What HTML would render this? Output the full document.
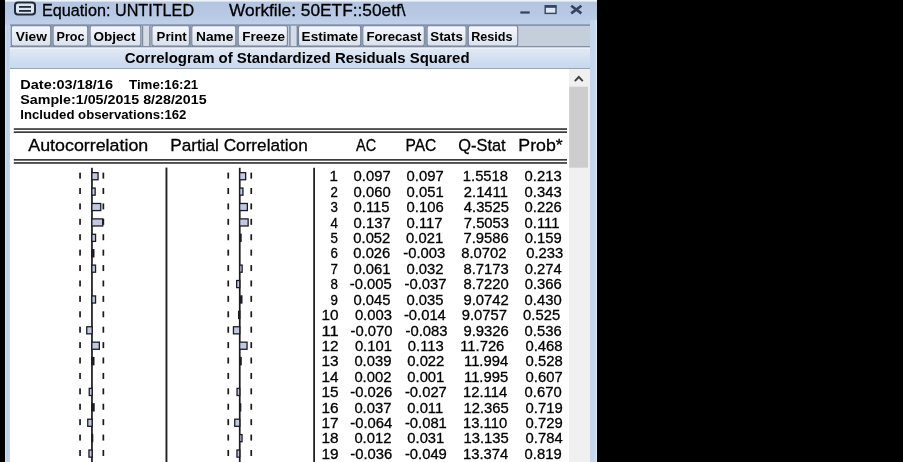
<!DOCTYPE html>
<html><head><meta charset="utf-8"><style>
html,body{margin:0;padding:0;background:#000;width:903px;height:462px;overflow:hidden}
svg{display:block;will-change:transform}
text{font-family:"Liberation Sans",sans-serif}
</style></head><body>
<svg width="903" height="462" viewBox="0 0 903 462">
<defs>
<linearGradient id="gTitle" x1="0" y1="0" x2="0" y2="1"><stop offset="0" stop-color="#b2c4e1"/><stop offset="0.6" stop-color="#b7c9e4"/><stop offset="1" stop-color="#bfd0ea"/></linearGradient>
<linearGradient id="gBtn" x1="0" y1="0" x2="0" y2="1"><stop offset="0" stop-color="#f5f7fb"/><stop offset="0.5" stop-color="#e9eef5"/><stop offset="1" stop-color="#d9e1ec"/></linearGradient>
<linearGradient id="gHdr" x1="0" y1="0" x2="0" y2="1"><stop offset="0" stop-color="#e2eaf6"/><stop offset="1" stop-color="#c7d7ed"/></linearGradient>
<linearGradient id="gLeft" x1="0" y1="0" x2="1" y2="0"><stop offset="0" stop-color="#d2dff2"/><stop offset="0.5" stop-color="#bdd0ea"/><stop offset="1" stop-color="#c8d8ee"/></linearGradient>
</defs>
<!-- window frame -->
<rect x="5" y="0" width="592" height="462" fill="#c2d3eb"/>
<rect x="5" y="0" width="592" height="25" fill="url(#gTitle)"/>
<rect x="5" y="0" width="592" height="1.6" fill="#eef2f9"/>
<rect x="5" y="25" width="5" height="437" fill="url(#gLeft)"/>
<rect x="590" y="20" width="7" height="442" fill="#c5d6ee"/>
<rect x="595.6" y="20" width="1.4" height="442" fill="#d9e7f8"/>
<!-- title icon -->
<rect x="15" y="2.6" width="20" height="12" rx="3" ry="3" fill="#dbe6f5" stroke="#222a38" stroke-width="2"/>
<rect x="19" y="6" width="12" height="1.8" fill="#222a38"/>
<rect x="19" y="10" width="12" height="1.8" fill="#222a38"/>
<!-- window controls -->
<rect x="520.3" y="11.4" width="9.4" height="2.2" fill="#34435e"/>
<rect x="545.2" y="5.8" width="10.8" height="7.6" fill="#dce7f6" stroke="#34435e" stroke-width="1.4"/>
<rect x="545" y="5.4" width="11.3" height="2.4" fill="#34435e"/>
<path d="M571.2 5.8 L581.4 13.4 M581.4 5.8 L571.2 13.4" stroke="#34435e" stroke-width="2.6"/>
<!-- toolbar -->
<rect x="10" y="25" width="580" height="22" fill="#c5cedb"/>
<rect x="10" y="24.4" width="580" height="1.4" fill="#7a889f"/>
<rect x="10" y="46.2" width="580" height="1.4" fill="#72809a"/>
<rect x="11.30" y="25.8" width="39.40" height="20.2" rx="2" ry="2" fill="url(#gBtn)" stroke="#75839a" stroke-width="1.1"/>
<rect x="53.10" y="25.8" width="34.60" height="20.2" rx="2" ry="2" fill="url(#gBtn)" stroke="#75839a" stroke-width="1.1"/>
<rect x="90.10" y="25.8" width="50.70" height="20.2" rx="2" ry="2" fill="url(#gBtn)" stroke="#75839a" stroke-width="1.1"/>
<rect x="151.90" y="25.8" width="37.50" height="20.2" rx="2" ry="2" fill="url(#gBtn)" stroke="#75839a" stroke-width="1.1"/>
<rect x="191.80" y="25.8" width="44.00" height="20.2" rx="2" ry="2" fill="url(#gBtn)" stroke="#75839a" stroke-width="1.1"/>
<rect x="238.20" y="25.8" width="49.20" height="20.2" rx="2" ry="2" fill="url(#gBtn)" stroke="#75839a" stroke-width="1.1"/>
<rect x="298.50" y="25.8" width="62.20" height="20.2" rx="2" ry="2" fill="url(#gBtn)" stroke="#75839a" stroke-width="1.1"/>
<rect x="362.80" y="25.8" width="61.50" height="20.2" rx="2" ry="2" fill="url(#gBtn)" stroke="#75839a" stroke-width="1.1"/>
<rect x="427.10" y="25.8" width="39.00" height="20.2" rx="2" ry="2" fill="url(#gBtn)" stroke="#75839a" stroke-width="1.1"/>
<rect x="468.30" y="25.8" width="49.40" height="20.2" rx="2" ry="2" fill="url(#gBtn)" stroke="#75839a" stroke-width="1.1"/>
<rect x="51.10" y="25.6" width="1.60" height="20.6" fill="#8693a8"/>
<rect x="88.10" y="25.6" width="1.60" height="20.6" fill="#8693a8"/>
<rect x="189.80" y="25.6" width="1.60" height="20.6" fill="#8693a8"/>
<rect x="236.20" y="25.6" width="1.60" height="20.6" fill="#8693a8"/>
<rect x="361.10" y="25.6" width="1.30" height="20.6" fill="#8693a8"/>
<rect x="424.70" y="25.6" width="2.00" height="20.6" fill="#8693a8"/>
<rect x="466.50" y="25.6" width="1.40" height="20.6" fill="#8693a8"/>
<rect x="141.8" y="25.8" width="8.6" height="20.2" fill="#d5dce6"/><rect x="141.8" y="25.8" width="1.4" height="20.2" fill="#7a889c"/><rect x="149.20000000000002" y="25.8" width="1.4" height="20.2" fill="#7a889c"/>
<rect x="289.2" y="25.8" width="8.6" height="20.2" fill="#d5dce6"/><rect x="289.2" y="25.8" width="1.4" height="20.2" fill="#7a889c"/><rect x="296.59999999999997" y="25.8" width="1.4" height="20.2" fill="#7a889c"/>
<!-- header band -->
<rect x="10" y="47.6" width="580" height="20.6" fill="url(#gHdr)"/>
<rect x="10" y="47.6" width="580" height="1" fill="#f2f6fc"/>
<rect x="10" y="68" width="580" height="1.2" fill="#97a5b8"/>
<!-- content -->
<rect x="10" y="69" width="559" height="393" fill="#fff"/>
<!-- scrollbar -->
<rect x="569" y="69" width="21" height="393" fill="#f0f0f0"/>
<rect x="569.2" y="86.7" width="18.8" height="81" fill="#cdcdcd"/>
<path d="M574.8 81.2 L578.8 77 L582.8 81.2" fill="none" stroke="#404040" stroke-width="1.9"/>
<!-- double lines -->
<rect x="13.8" y="128.2" width="553.2" height="1.7" fill="#3a3a3a"/>
<rect x="13.8" y="131.3" width="553.2" height="1.7" fill="#3a3a3a"/>
<rect x="13.8" y="159" width="553.2" height="1.7" fill="#3a3a3a"/>
<rect x="13.8" y="162.1" width="553.2" height="1.7" fill="#3a3a3a"/>
<!-- chart lines -->
<rect x="91.1" y="167.8" width="1.7" height="295" fill="#1a1a1a"/>
<rect x="238.9" y="167.8" width="1.7" height="295" fill="#1a1a1a"/>
<rect x="165.5" y="167.6" width="1.9" height="295" fill="#222"/>
<rect x="313.2" y="167.8" width="1.8" height="295" fill="#222"/>
<rect x="91.20" y="172.00" width="7.50" height="8.4" fill="#1c1c24"/>
<rect x="92.50" y="173.30" width="4.90" height="5.80" fill="#c2c9e2"/>
<rect x="239.00" y="172.00" width="7.30" height="8.4" fill="#1c1c24"/>
<rect x="240.30" y="173.30" width="4.70" height="5.80" fill="#c2c9e2"/>
<rect x="79.2" y="172.60" width="1.7" height="6" fill="#1a1a1a"/>
<rect x="102.5" y="172.60" width="1.7" height="6" fill="#1a1a1a"/>
<rect x="227.4" y="172.60" width="1.7" height="6" fill="#1a1a1a"/>
<rect x="250.4" y="172.60" width="1.7" height="6" fill="#1a1a1a"/>
<rect x="91.20" y="187.41" width="4.60" height="8.4" fill="#1c1c24"/>
<rect x="92.50" y="188.71" width="2.00" height="5.80" fill="#c2c9e2"/>
<rect x="239.00" y="187.41" width="4.60" height="8.4" fill="#1c1c24"/>
<rect x="240.30" y="188.71" width="2.00" height="5.80" fill="#c2c9e2"/>
<rect x="79.2" y="188.01" width="1.7" height="6" fill="#1a1a1a"/>
<rect x="102.5" y="188.01" width="1.7" height="6" fill="#1a1a1a"/>
<rect x="227.4" y="188.01" width="1.7" height="6" fill="#1a1a1a"/>
<rect x="250.4" y="188.01" width="1.7" height="6" fill="#1a1a1a"/>
<rect x="91.20" y="202.82" width="10.20" height="8.4" fill="#1c1c24"/>
<rect x="92.50" y="204.12" width="7.60" height="5.80" fill="#c2c9e2"/>
<rect x="239.00" y="202.82" width="9.00" height="8.4" fill="#1c1c24"/>
<rect x="240.30" y="204.12" width="6.40" height="5.80" fill="#c2c9e2"/>
<rect x="79.2" y="203.42" width="1.7" height="6" fill="#1a1a1a"/>
<rect x="102.5" y="203.42" width="1.7" height="6" fill="#1a1a1a"/>
<rect x="227.4" y="203.42" width="1.7" height="6" fill="#1a1a1a"/>
<rect x="250.4" y="203.42" width="1.7" height="6" fill="#1a1a1a"/>
<rect x="91.20" y="218.23" width="12.20" height="8.4" fill="#1c1c24"/>
<rect x="92.50" y="219.53" width="9.60" height="5.80" fill="#c2c9e2"/>
<rect x="239.00" y="218.23" width="9.80" height="8.4" fill="#1c1c24"/>
<rect x="240.30" y="219.53" width="7.20" height="5.80" fill="#c2c9e2"/>
<rect x="79.2" y="218.83" width="1.7" height="6" fill="#1a1a1a"/>
<rect x="102.5" y="218.83" width="1.7" height="6" fill="#1a1a1a"/>
<rect x="227.4" y="218.83" width="1.7" height="6" fill="#1a1a1a"/>
<rect x="250.4" y="218.83" width="1.7" height="6" fill="#1a1a1a"/>
<rect x="91.20" y="233.64" width="5.00" height="8.4" fill="#1c1c24"/>
<rect x="92.50" y="234.94" width="2.40" height="5.80" fill="#c2c9e2"/>
<rect x="239.00" y="233.64" width="2.70" height="8.4" fill="#1c1c24"/>
<rect x="79.2" y="234.24" width="1.7" height="6" fill="#1a1a1a"/>
<rect x="102.5" y="234.24" width="1.7" height="6" fill="#1a1a1a"/>
<rect x="227.4" y="234.24" width="1.7" height="6" fill="#1a1a1a"/>
<rect x="250.4" y="234.24" width="1.7" height="6" fill="#1a1a1a"/>
<rect x="91.20" y="249.05" width="3.30" height="8.4" fill="#1c1c24"/>
<rect x="79.2" y="249.65" width="1.7" height="6" fill="#1a1a1a"/>
<rect x="102.5" y="249.65" width="1.7" height="6" fill="#1a1a1a"/>
<rect x="227.4" y="249.65" width="1.7" height="6" fill="#1a1a1a"/>
<rect x="250.4" y="249.65" width="1.7" height="6" fill="#1a1a1a"/>
<rect x="91.20" y="264.46" width="5.00" height="8.4" fill="#1c1c24"/>
<rect x="92.50" y="265.76" width="2.40" height="5.80" fill="#c2c9e2"/>
<rect x="239.00" y="264.46" width="3.80" height="8.4" fill="#1c1c24"/>
<rect x="240.30" y="265.76" width="1.20" height="5.80" fill="#c2c9e2"/>
<rect x="79.2" y="265.06" width="1.7" height="6" fill="#1a1a1a"/>
<rect x="102.5" y="265.06" width="1.7" height="6" fill="#1a1a1a"/>
<rect x="227.4" y="265.06" width="1.7" height="6" fill="#1a1a1a"/>
<rect x="250.4" y="265.06" width="1.7" height="6" fill="#1a1a1a"/>
<rect x="236.00" y="279.87" width="4.40" height="8.4" fill="#1c1c24"/>
<rect x="237.30" y="281.17" width="1.80" height="5.80" fill="#c2c9e2"/>
<rect x="79.2" y="280.47" width="1.7" height="6" fill="#1a1a1a"/>
<rect x="102.5" y="280.47" width="1.7" height="6" fill="#1a1a1a"/>
<rect x="227.4" y="280.47" width="1.7" height="6" fill="#1a1a1a"/>
<rect x="250.4" y="280.47" width="1.7" height="6" fill="#1a1a1a"/>
<rect x="91.20" y="295.28" width="5.00" height="8.4" fill="#1c1c24"/>
<rect x="92.50" y="296.58" width="2.40" height="5.80" fill="#c2c9e2"/>
<rect x="239.00" y="295.28" width="3.50" height="8.4" fill="#1c1c24"/>
<rect x="79.2" y="295.88" width="1.7" height="6" fill="#1a1a1a"/>
<rect x="102.5" y="295.88" width="1.7" height="6" fill="#1a1a1a"/>
<rect x="227.4" y="295.88" width="1.7" height="6" fill="#1a1a1a"/>
<rect x="250.4" y="295.88" width="1.7" height="6" fill="#1a1a1a"/>
<rect x="238.00" y="310.69" width="2.40" height="8.4" fill="#1c1c24"/>
<rect x="79.2" y="311.29" width="1.7" height="6" fill="#1a1a1a"/>
<rect x="102.5" y="311.29" width="1.7" height="6" fill="#1a1a1a"/>
<rect x="227.4" y="311.29" width="1.7" height="6" fill="#1a1a1a"/>
<rect x="250.4" y="311.29" width="1.7" height="6" fill="#1a1a1a"/>
<rect x="86.10" y="326.10" width="6.70" height="8.4" fill="#1c1c24"/>
<rect x="87.40" y="327.40" width="4.10" height="5.80" fill="#c2c9e2"/>
<rect x="232.80" y="326.10" width="7.60" height="8.4" fill="#1c1c24"/>
<rect x="234.10" y="327.40" width="5.00" height="5.80" fill="#c2c9e2"/>
<rect x="79.2" y="326.70" width="1.7" height="6" fill="#1a1a1a"/>
<rect x="102.5" y="326.70" width="1.7" height="6" fill="#1a1a1a"/>
<rect x="227.4" y="326.70" width="1.7" height="6" fill="#1a1a1a"/>
<rect x="250.4" y="326.70" width="1.7" height="6" fill="#1a1a1a"/>
<rect x="91.20" y="341.51" width="8.80" height="8.4" fill="#1c1c24"/>
<rect x="92.50" y="342.81" width="6.20" height="5.80" fill="#c2c9e2"/>
<rect x="239.00" y="341.51" width="8.70" height="8.4" fill="#1c1c24"/>
<rect x="240.30" y="342.81" width="6.10" height="5.80" fill="#c2c9e2"/>
<rect x="79.2" y="342.11" width="1.7" height="6" fill="#1a1a1a"/>
<rect x="102.5" y="342.11" width="1.7" height="6" fill="#1a1a1a"/>
<rect x="227.4" y="342.11" width="1.7" height="6" fill="#1a1a1a"/>
<rect x="250.4" y="342.11" width="1.7" height="6" fill="#1a1a1a"/>
<rect x="91.20" y="356.92" width="3.30" height="8.4" fill="#1c1c24"/>
<rect x="239.00" y="356.92" width="2.80" height="8.4" fill="#1c1c24"/>
<rect x="79.2" y="357.52" width="1.7" height="6" fill="#1a1a1a"/>
<rect x="102.5" y="357.52" width="1.7" height="6" fill="#1a1a1a"/>
<rect x="227.4" y="357.52" width="1.7" height="6" fill="#1a1a1a"/>
<rect x="250.4" y="357.52" width="1.7" height="6" fill="#1a1a1a"/>
<rect x="79.2" y="372.93" width="1.7" height="6" fill="#1a1a1a"/>
<rect x="102.5" y="372.93" width="1.7" height="6" fill="#1a1a1a"/>
<rect x="227.4" y="372.93" width="1.7" height="6" fill="#1a1a1a"/>
<rect x="250.4" y="372.93" width="1.7" height="6" fill="#1a1a1a"/>
<rect x="88.60" y="387.74" width="4.20" height="8.4" fill="#1c1c24"/>
<rect x="89.90" y="389.04" width="1.60" height="5.80" fill="#c2c9e2"/>
<rect x="236.40" y="387.74" width="4.00" height="8.4" fill="#1c1c24"/>
<rect x="237.70" y="389.04" width="1.40" height="5.80" fill="#c2c9e2"/>
<rect x="79.2" y="388.34" width="1.7" height="6" fill="#1a1a1a"/>
<rect x="102.5" y="388.34" width="1.7" height="6" fill="#1a1a1a"/>
<rect x="227.4" y="388.34" width="1.7" height="6" fill="#1a1a1a"/>
<rect x="250.4" y="388.34" width="1.7" height="6" fill="#1a1a1a"/>
<rect x="91.20" y="403.15" width="3.50" height="8.4" fill="#1c1c24"/>
<rect x="239.00" y="403.15" width="2.30" height="8.4" fill="#1c1c24"/>
<rect x="79.2" y="403.75" width="1.7" height="6" fill="#1a1a1a"/>
<rect x="102.5" y="403.75" width="1.7" height="6" fill="#1a1a1a"/>
<rect x="227.4" y="403.75" width="1.7" height="6" fill="#1a1a1a"/>
<rect x="250.4" y="403.75" width="1.7" height="6" fill="#1a1a1a"/>
<rect x="87.10" y="418.56" width="5.70" height="8.4" fill="#1c1c24"/>
<rect x="88.40" y="419.86" width="3.10" height="5.80" fill="#c2c9e2"/>
<rect x="234.10" y="418.56" width="6.30" height="8.4" fill="#1c1c24"/>
<rect x="235.40" y="419.86" width="3.70" height="5.80" fill="#c2c9e2"/>
<rect x="79.2" y="419.16" width="1.7" height="6" fill="#1a1a1a"/>
<rect x="102.5" y="419.16" width="1.7" height="6" fill="#1a1a1a"/>
<rect x="227.4" y="419.16" width="1.7" height="6" fill="#1a1a1a"/>
<rect x="250.4" y="419.16" width="1.7" height="6" fill="#1a1a1a"/>
<rect x="91.20" y="433.97" width="2.10" height="8.4" fill="#1c1c24"/>
<rect x="239.00" y="433.97" width="3.70" height="8.4" fill="#1c1c24"/>
<rect x="240.30" y="435.27" width="1.10" height="5.80" fill="#c2c9e2"/>
<rect x="79.2" y="434.57" width="1.7" height="6" fill="#1a1a1a"/>
<rect x="102.5" y="434.57" width="1.7" height="6" fill="#1a1a1a"/>
<rect x="227.4" y="434.57" width="1.7" height="6" fill="#1a1a1a"/>
<rect x="250.4" y="434.57" width="1.7" height="6" fill="#1a1a1a"/>
<rect x="88.30" y="449.38" width="4.50" height="8.4" fill="#1c1c24"/>
<rect x="89.60" y="450.68" width="1.90" height="5.80" fill="#c2c9e2"/>
<rect x="236.30" y="449.38" width="4.10" height="8.4" fill="#1c1c24"/>
<rect x="237.60" y="450.68" width="1.50" height="5.80" fill="#c2c9e2"/>
<rect x="79.2" y="449.98" width="1.7" height="6" fill="#1a1a1a"/>
<rect x="102.5" y="449.98" width="1.7" height="6" fill="#1a1a1a"/>
<rect x="227.4" y="449.98" width="1.7" height="6" fill="#1a1a1a"/>
<rect x="250.4" y="449.98" width="1.7" height="6" fill="#1a1a1a"/>
<g fill="#000">
<text x="42.04" y="16.00" font-size="16.8" stroke="#000" stroke-width="0.3" textLength="152.08" lengthAdjust="spacingAndGlyphs">Equation: UNTITLED</text>
<text x="229.00" y="16.00" font-size="16.8" stroke="#000" stroke-width="0.3" textLength="176.65" lengthAdjust="spacingAndGlyphs">Workfile: 50ETF::50etf\</text>
<text x="15.80" y="40.80" font-size="13.4" font-weight="bold" textLength="31.10" lengthAdjust="spacingAndGlyphs">View</text>
<text x="56.50" y="40.80" font-size="13.4" font-weight="bold" textLength="27.98" lengthAdjust="spacingAndGlyphs">Proc</text>
<text x="93.40" y="40.80" font-size="13.4" font-weight="bold" textLength="42.25" lengthAdjust="spacingAndGlyphs">Object</text>
<text x="156.60" y="40.80" font-size="13.4" font-weight="bold" textLength="30.17" lengthAdjust="spacingAndGlyphs">Print</text>
<text x="196.10" y="40.80" font-size="13.4" font-weight="bold" textLength="37.36" lengthAdjust="spacingAndGlyphs">Name</text>
<text x="242.20" y="40.80" font-size="13.4" font-weight="bold" textLength="42.75" lengthAdjust="spacingAndGlyphs">Freeze</text>
<text x="301.60" y="40.80" font-size="13.4" font-weight="bold" textLength="56.55" lengthAdjust="spacingAndGlyphs">Estimate</text>
<text x="366.40" y="40.80" font-size="13.4" font-weight="bold" textLength="55.07" lengthAdjust="spacingAndGlyphs">Forecast</text>
<text x="430.30" y="40.80" font-size="13.4" font-weight="bold" textLength="32.54" lengthAdjust="spacingAndGlyphs">Stats</text>
<text x="471.20" y="40.80" font-size="13.4" font-weight="bold" textLength="41.42" lengthAdjust="spacingAndGlyphs">Resids</text>
<text x="124.70" y="62.60" font-size="15.3" font-weight="bold" textLength="344.84" lengthAdjust="spacingAndGlyphs">Correlogram of Standardized Residuals Squared</text>
<text x="20.30" y="88.80" font-size="13.4" font-weight="bold" textLength="92.68" lengthAdjust="spacingAndGlyphs">Date:03/18/16</text>
<text x="129.00" y="88.80" font-size="13.4" font-weight="bold" textLength="69.25" lengthAdjust="spacingAndGlyphs">Time:16:21</text>
<text x="20.30" y="104.00" font-size="13.4" font-weight="bold" textLength="186.31" lengthAdjust="spacingAndGlyphs">Sample:1/05/2015 8/28/2015</text>
<text x="20.30" y="119.10" font-size="13.4" font-weight="bold" textLength="166.14" lengthAdjust="spacingAndGlyphs">Included observations:162</text>
<text x="28.30" y="151.20" font-size="16.8" stroke="#000" stroke-width="0.3" textLength="119.95" lengthAdjust="spacingAndGlyphs">Autocorrelation</text>
<text x="170.18" y="151.20" font-size="16.8" stroke="#000" stroke-width="0.3" textLength="137.57" lengthAdjust="spacingAndGlyphs">Partial Correlation</text>
<text x="356.00" y="151.20" font-size="16.8" stroke="#000" stroke-width="0.3" textLength="20.10" lengthAdjust="spacingAndGlyphs">AC</text>
<text x="405.47" y="151.20" font-size="16.8" stroke="#000" stroke-width="0.3" textLength="30.84" lengthAdjust="spacingAndGlyphs">PAC</text>
<text x="458.30" y="151.20" font-size="16.8" stroke="#000" stroke-width="0.3" textLength="47.37" lengthAdjust="spacingAndGlyphs">Q-Stat</text>
<text x="518.34" y="151.20" font-size="16.8" stroke="#000" stroke-width="0.3" textLength="44.46" lengthAdjust="spacingAndGlyphs">Prob*</text>
<text x="329.57" y="181.40" font-size="14.8" stroke="#000" stroke-width="0.3" textLength="8.46" lengthAdjust="spacingAndGlyphs">1</text>
<text x="353.60" y="181.40" font-size="14.8" stroke="#000" stroke-width="0.3">0.097</text>
<text x="406.60" y="181.40" font-size="14.8" stroke="#000" stroke-width="0.3">0.097</text>
<text x="462.80" y="181.40" font-size="14.8" stroke="#000" stroke-width="0.3">1.5518</text>
<text x="524.60" y="181.40" font-size="14.8" stroke="#000" stroke-width="0.3">0.213</text>
<text x="330.60" y="196.81" font-size="14.8" stroke="#000" stroke-width="0.3" textLength="7.41" lengthAdjust="spacingAndGlyphs">2</text>
<text x="353.60" y="196.81" font-size="14.8" stroke="#000" stroke-width="0.3">0.060</text>
<text x="406.60" y="196.81" font-size="14.8" stroke="#000" stroke-width="0.3">0.051</text>
<text x="463.80" y="196.81" font-size="14.8" stroke="#000" stroke-width="0.3">2.1411</text>
<text x="524.60" y="196.81" font-size="14.8" stroke="#000" stroke-width="0.3">0.343</text>
<text x="330.60" y="212.22" font-size="14.8" stroke="#000" stroke-width="0.3" textLength="7.41" lengthAdjust="spacingAndGlyphs">3</text>
<text x="353.60" y="212.22" font-size="14.8" stroke="#000" stroke-width="0.3">0.115</text>
<text x="406.60" y="212.22" font-size="14.8" stroke="#000" stroke-width="0.3">0.106</text>
<text x="463.80" y="212.22" font-size="14.8" stroke="#000" stroke-width="0.3">4.3525</text>
<text x="524.60" y="212.22" font-size="14.8" stroke="#000" stroke-width="0.3">0.226</text>
<text x="330.60" y="227.63" font-size="14.8" stroke="#000" stroke-width="0.3" textLength="7.41" lengthAdjust="spacingAndGlyphs">4</text>
<text x="353.60" y="227.63" font-size="14.8" stroke="#000" stroke-width="0.3">0.137</text>
<text x="406.60" y="227.63" font-size="14.8" stroke="#000" stroke-width="0.3">0.117</text>
<text x="463.80" y="227.63" font-size="14.8" stroke="#000" stroke-width="0.3">7.5053</text>
<text x="524.60" y="227.63" font-size="14.8" stroke="#000" stroke-width="0.3">0.111</text>
<text x="330.60" y="243.04" font-size="14.8" stroke="#000" stroke-width="0.3" textLength="7.41" lengthAdjust="spacingAndGlyphs">5</text>
<text x="353.30" y="243.04" font-size="14.8" stroke="#000" stroke-width="0.3">0.052</text>
<text x="406.10" y="243.04" font-size="14.8" stroke="#000" stroke-width="0.3">0.021</text>
<text x="463.50" y="243.04" font-size="14.8" stroke="#000" stroke-width="0.3">7.9586</text>
<text x="524.70" y="243.04" font-size="14.8" stroke="#000" stroke-width="0.3">0.159</text>
<text x="330.60" y="258.45" font-size="14.8" stroke="#000" stroke-width="0.3" textLength="7.41" lengthAdjust="spacingAndGlyphs">6</text>
<text x="353.30" y="258.45" font-size="14.8" stroke="#000" stroke-width="0.3">0.026</text>
<text x="403.30" y="258.45" font-size="14.8" stroke="#000" stroke-width="0.3">-0.003</text>
<text x="461.20" y="258.45" font-size="14.8" stroke="#000" stroke-width="0.3">8.0702</text>
<text x="526.20" y="258.45" font-size="14.8" stroke="#000" stroke-width="0.3">0.233</text>
<text x="330.60" y="273.86" font-size="14.8" stroke="#000" stroke-width="0.3" textLength="7.41" lengthAdjust="spacingAndGlyphs">7</text>
<text x="353.50" y="273.86" font-size="14.8" stroke="#000" stroke-width="0.3">0.061</text>
<text x="406.50" y="273.86" font-size="14.8" stroke="#000" stroke-width="0.3">0.032</text>
<text x="463.50" y="273.86" font-size="14.8" stroke="#000" stroke-width="0.3">8.7173</text>
<text x="524.70" y="273.86" font-size="14.8" stroke="#000" stroke-width="0.3">0.274</text>
<text x="330.60" y="289.27" font-size="14.8" stroke="#000" stroke-width="0.3" textLength="7.41" lengthAdjust="spacingAndGlyphs">8</text>
<text x="349.80" y="289.27" font-size="14.8" stroke="#000" stroke-width="0.3">-0.005</text>
<text x="404.50" y="289.27" font-size="14.8" stroke="#000" stroke-width="0.3">-0.037</text>
<text x="463.50" y="289.27" font-size="14.8" stroke="#000" stroke-width="0.3">8.7220</text>
<text x="524.70" y="289.27" font-size="14.8" stroke="#000" stroke-width="0.3">0.366</text>
<text x="330.60" y="304.68" font-size="14.8" stroke="#000" stroke-width="0.3" textLength="7.41" lengthAdjust="spacingAndGlyphs">9</text>
<text x="353.50" y="304.68" font-size="14.8" stroke="#000" stroke-width="0.3">0.045</text>
<text x="406.50" y="304.68" font-size="14.8" stroke="#000" stroke-width="0.3">0.035</text>
<text x="463.50" y="304.68" font-size="14.8" stroke="#000" stroke-width="0.3">9.0742</text>
<text x="524.60" y="304.68" font-size="14.8" stroke="#000" stroke-width="0.3">0.430</text>
<text x="321.56" y="320.09" font-size="14.8" stroke="#000" stroke-width="0.3" textLength="17.08" lengthAdjust="spacingAndGlyphs">10</text>
<text x="354.90" y="320.09" font-size="14.8" stroke="#000" stroke-width="0.3">0.003</text>
<text x="403.90" y="320.09" font-size="14.8" stroke="#000" stroke-width="0.3">-0.014</text>
<text x="461.70" y="320.09" font-size="14.8" stroke="#000" stroke-width="0.3">9.0757</text>
<text x="523.10" y="320.09" font-size="14.8" stroke="#000" stroke-width="0.3">0.525</text>
<text x="321.48" y="335.50" font-size="14.8" stroke="#000" stroke-width="0.3" textLength="17.17" lengthAdjust="spacingAndGlyphs">11</text>
<text x="350.50" y="335.50" font-size="14.8" stroke="#000" stroke-width="0.3">-0.070</text>
<text x="405.60" y="335.50" font-size="14.8" stroke="#000" stroke-width="0.3">-0.083</text>
<text x="463.50" y="335.50" font-size="14.8" stroke="#000" stroke-width="0.3">9.9326</text>
<text x="524.60" y="335.50" font-size="14.8" stroke="#000" stroke-width="0.3">0.536</text>
<text x="321.56" y="350.91" font-size="14.8" stroke="#000" stroke-width="0.3" textLength="17.08" lengthAdjust="spacingAndGlyphs">12</text>
<text x="354.90" y="350.91" font-size="14.8" stroke="#000" stroke-width="0.3">0.101</text>
<text x="407.80" y="350.91" font-size="14.8" stroke="#000" stroke-width="0.3">0.113</text>
<text x="460.20" y="350.91" font-size="14.8" stroke="#000" stroke-width="0.3">11.726</text>
<text x="525.50" y="350.91" font-size="14.8" stroke="#000" stroke-width="0.3">0.468</text>
<text x="321.56" y="366.32" font-size="14.8" stroke="#000" stroke-width="0.3" textLength="17.08" lengthAdjust="spacingAndGlyphs">13</text>
<text x="354.40" y="366.32" font-size="14.8" stroke="#000" stroke-width="0.3">0.039</text>
<text x="407.30" y="366.32" font-size="14.8" stroke="#000" stroke-width="0.3">0.022</text>
<text x="464.00" y="366.32" font-size="14.8" stroke="#000" stroke-width="0.3">11.994</text>
<text x="525.60" y="366.32" font-size="14.8" stroke="#000" stroke-width="0.3">0.528</text>
<text x="321.56" y="381.73" font-size="14.8" stroke="#000" stroke-width="0.3" textLength="17.08" lengthAdjust="spacingAndGlyphs">14</text>
<text x="354.40" y="381.73" font-size="14.8" stroke="#000" stroke-width="0.3">0.002</text>
<text x="407.30" y="381.73" font-size="14.8" stroke="#000" stroke-width="0.3">0.001</text>
<text x="464.00" y="381.73" font-size="14.8" stroke="#000" stroke-width="0.3">11.995</text>
<text x="525.60" y="381.73" font-size="14.8" stroke="#000" stroke-width="0.3">0.607</text>
<text x="321.56" y="397.14" font-size="14.8" stroke="#000" stroke-width="0.3" textLength="17.08" lengthAdjust="spacingAndGlyphs">15</text>
<text x="350.30" y="397.14" font-size="14.8" stroke="#000" stroke-width="0.3">-0.026</text>
<text x="404.90" y="397.14" font-size="14.8" stroke="#000" stroke-width="0.3">-0.027</text>
<text x="463.00" y="397.14" font-size="14.8" stroke="#000" stroke-width="0.3">12.114</text>
<text x="524.60" y="397.14" font-size="14.8" stroke="#000" stroke-width="0.3">0.670</text>
<text x="321.56" y="412.55" font-size="14.8" stroke="#000" stroke-width="0.3" textLength="17.08" lengthAdjust="spacingAndGlyphs">16</text>
<text x="354.40" y="412.55" font-size="14.8" stroke="#000" stroke-width="0.3">0.037</text>
<text x="407.30" y="412.55" font-size="14.8" stroke="#000" stroke-width="0.3">0.011</text>
<text x="463.50" y="412.55" font-size="14.8" stroke="#000" stroke-width="0.3">12.365</text>
<text x="525.60" y="412.55" font-size="14.8" stroke="#000" stroke-width="0.3">0.719</text>
<text x="321.56" y="427.96" font-size="14.8" stroke="#000" stroke-width="0.3" textLength="17.08" lengthAdjust="spacingAndGlyphs">17</text>
<text x="350.30" y="427.96" font-size="14.8" stroke="#000" stroke-width="0.3">-0.064</text>
<text x="404.90" y="427.96" font-size="14.8" stroke="#000" stroke-width="0.3">-0.081</text>
<text x="463.00" y="427.96" font-size="14.8" stroke="#000" stroke-width="0.3">13.110</text>
<text x="525.60" y="427.96" font-size="14.8" stroke="#000" stroke-width="0.3">0.729</text>
<text x="321.56" y="443.37" font-size="14.8" stroke="#000" stroke-width="0.3" textLength="17.08" lengthAdjust="spacingAndGlyphs">18</text>
<text x="354.40" y="443.37" font-size="14.8" stroke="#000" stroke-width="0.3">0.012</text>
<text x="407.30" y="443.37" font-size="14.8" stroke="#000" stroke-width="0.3">0.031</text>
<text x="463.50" y="443.37" font-size="14.8" stroke="#000" stroke-width="0.3">13.135</text>
<text x="525.60" y="443.37" font-size="14.8" stroke="#000" stroke-width="0.3">0.784</text>
<text x="321.56" y="458.78" font-size="14.8" stroke="#000" stroke-width="0.3" textLength="17.08" lengthAdjust="spacingAndGlyphs">19</text>
<text x="350.30" y="458.78" font-size="14.8" stroke="#000" stroke-width="0.3">-0.036</text>
<text x="404.90" y="458.78" font-size="14.8" stroke="#000" stroke-width="0.3">-0.049</text>
<text x="463.00" y="458.78" font-size="14.8" stroke="#000" stroke-width="0.3">13.374</text>
<text x="524.60" y="458.78" font-size="14.8" stroke="#000" stroke-width="0.3">0.819</text>
</g>
</svg>
</body></html>
